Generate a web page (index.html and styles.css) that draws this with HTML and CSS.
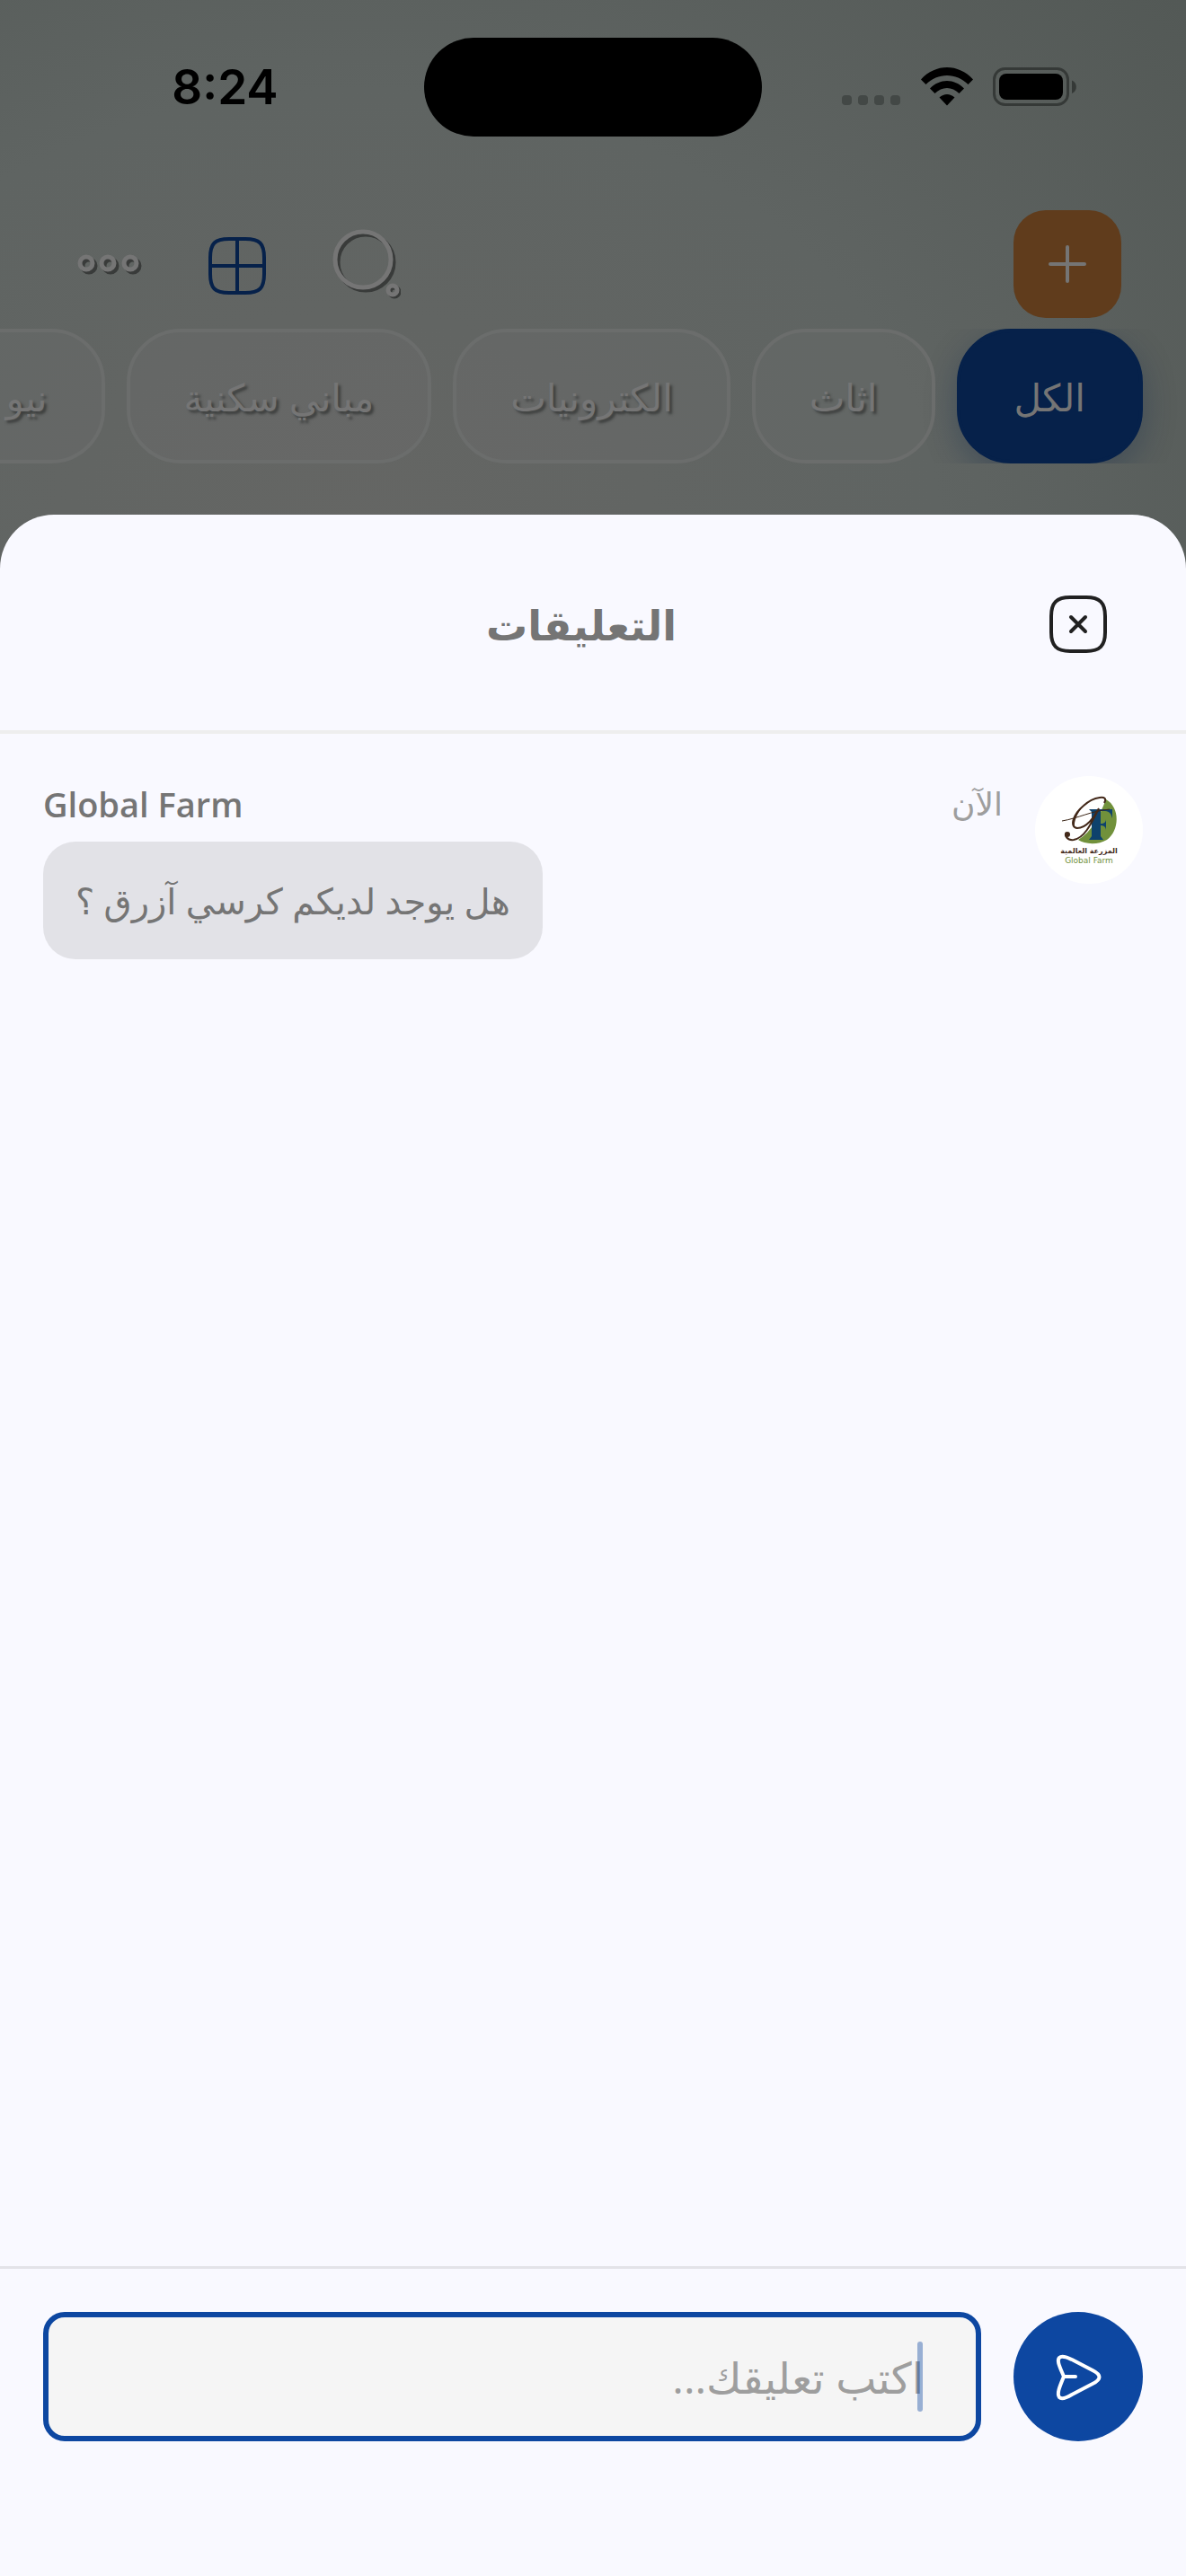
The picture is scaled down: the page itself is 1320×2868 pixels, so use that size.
FILE: index.html
```html
<!DOCTYPE html>
<html lang="ar" dir="rtl">
<head>
  <meta charset="UTF-8">
  <meta name="viewport" content="width=device-width, initial-scale=1">
  <title>التعليقات</title>
  <link rel="stylesheet" href="styles.css">
</head>
<body>
  <div class="status" dir="ltr">
    <span class="clock">8:24</span>
    <div class="island"></div>
    <div class="indicators">
      <svg class="signal" width="66" height="44" viewBox="0 0 66 44">
        <rect x="0" y="31" width="11" height="11" rx="4"/>
        <rect x="18" y="31" width="11" height="11" rx="4"/>
        <rect x="36" y="31" width="11" height="11" rx="4"/>
        <rect x="54" y="31" width="11" height="11" rx="4"/>
      </svg>
      <svg width="58" height="44" viewBox="0 0 58 44">
        <path d="M0 13.500C16-4.500 42-4.500 58 13.500L52.500 19C39.500 5.500 18.500 5.500 5.500 19Z"/>
        <path d="M10 23.500C21 12 37 12 48 23.500L42.500 29C34.500 21 23.500 21 15.500 29Z"/>
        <path d="M20.500 33.500C25.500 28.700 32.500 28.700 37.500 33.500L29 42.500Z"/>
      </svg>
      <svg width="94" height="44" viewBox="0 0 94 44">
        <rect class="battery-case" x="1.500" y="1.500" width="82" height="40" rx="12"/>
        <rect x="7" y="7" width="71" height="29" rx="8"/>
        <path class="battery-tip" d="M88 14.500c6.500 2.500 6.500 12 0 14.500z"/>
      </svg>
    </div>
  </div>

  <div class="toolbar" dir="ltr">
    <div class="tools">
      <button class="tool" aria-label="المزيد">
        <svg width="78" height="78" viewBox="0 0 78 78">
          <g class="icon-shadow"><circle cx="17" cy="41" r="7"/><circle cx="41" cy="41" r="7"/><circle cx="66" cy="41" r="7"/></g>
          <g class="icon-line"><circle cx="14" cy="38" r="7"/><circle cx="38" cy="38" r="7"/><circle cx="63" cy="38" r="7"/></g>
        </svg>
      </button>
      <button class="tool" aria-label="الأقسام">
        <svg class="grid-icon" width="78" height="78" viewBox="0 0 78 78">
          <path d="M30 11H48C64 11 69 16 69 32V50C69 66 64 71 48 71H30C14 71 9 66 9 50V32C9 16 14 11 30 11Z"/>
          <path d="M39 11V71M9 41H69"/>
        </svg>
      </button>
      <button class="tool" aria-label="بحث">
        <svg width="78" height="78" viewBox="0 0 78 78">
          <g class="icon-shadow"><circle cx="39" cy="37" r="31"/><circle cx="71" cy="70" r="5"/></g>
          <g class="icon-line"><circle cx="36" cy="34" r="31"/><circle cx="69" cy="68" r="5"/></g>
        </svg>
      </button>
    </div>
    <button class="add" aria-label="إضافة">
      <svg width="48" height="48" viewBox="0 0 48 48"><path d="M24 5V43M5 24H43"/></svg>
    </button>
  </div>

  <nav class="chips">
    <button class="chip active">الكل</button>
    <button class="chip">اثاث</button>
    <button class="chip">الكترونيات</button>
    <button class="chip">مباني سكنية</button>
    <button class="chip">نيو يورك</button>
  </nav>

  <section class="sheet">
    <header class="sheet-header">
      <button class="close" aria-label="إغلاق">
        <svg width="72" height="72" viewBox="0 0 72 72">
          <path d="M27 6H45C60 6 66 12 66 27V45C66 60 60 66 45 66H27C12 66 6 60 6 45V27C6 12 12 6 27 6Z"/>
          <path d="M28 28L44 44M44 28L28 44"/>
        </svg>
      </button>
      <h1>التعليقات</h1>
    </header>

    <main class="comments">
      <article class="comment">
        <svg class="avatar" viewBox="0 0 120 120">
          <circle cx="60" cy="60" r="60" fill="#fff"/>
          <path d="M79 26C95 35 94 61 80 71C70 77 55 76 48 71C63 62 71 46 79 26Z" fill="#71913b"/>
          <path d="M60 37H86V47C84 40 82 39 76 39H73V53C77 53 79 51 79 48V61C79 57 77 55 73 55V67L76 71H60L63 67V40Z" fill="#0e426c"/>
          <path d="M30 50C48 47 62 39 83 37" fill="none" stroke="#3a2415" stroke-width="1"/>
          <path d="M77 30C83 20 65 23 54 33C42 43 38 57 47 58C57 58 66 46 71 36C62 54 55 69 43 71C36 72 32 66 35 63" fill="none" stroke="#43291a" stroke-width="2"/>
          <path d="M55 32C43 40 38 55 44 57C43 50 47 41 55 32Z" fill="#43291a"/>
          <circle cx="36" cy="65" r="3" fill="#43291a"/>
          <text class="logo-ar" x="60" y="86">المزرعة العالمية</text>
          <text class="logo-en" x="60" y="97">Global Farm</text>
        </svg>
        <div class="comment-body">
          <div class="comment-meta">
            <time>الآن</time>
            <strong>Global Farm</strong>
          </div>
          <p class="bubble">هل يوجد لديكم كرسي آزرق ؟</p>
        </div>
      </article>
    </main>

    <form class="composer">
      <button class="send" type="button" aria-label="إرسال">
        <svg width="72" height="72" viewBox="0 0 72 72">
          <path d="M20 36C15 24 12 18 15 15C18 12 24 15 29 17L52 29C62 34 62 39 52 44L29 56C24 59 18 62 15 59C12 55 15 48 20 36ZM20 36H33"/>
        </svg>
      </button>
      <div class="field">
        <input type="text" aria-label="اكتب تعليقك" placeholder="اكتب تعليقك...">
        <span class="caret"></span>
      </div>
    </form>
  </section>
</body>
</html>
```
FILE: styles.css
```css
* { box-sizing: border-box; }
body { margin: 0; min-height: 100vh; display: flex; flex-direction: column; font-family: "Open Sans", "DejaVu Sans", sans-serif; color: #757575; background: radial-gradient(ellipse 1300px 1000px at 30% 600px, #656664, #5f6462 50%, #515754); }
button { padding: 0; border: none; background: none; font: inherit; color: inherit; cursor: pointer; }
svg { display: block; }

.status { display: grid; grid-template-columns: 1fr 376px 1fr; align-items: center; height: 234px; padding: 42px 0 82px; }
.clock { padding-left: 29px; text-align: center; font: 600 53px "Inter", sans-serif; color: #000; }
.island { height: 110px; border-radius: 55px; background: #000; }
.indicators { display: flex; align-items: center; gap: 22px; padding-left: 89px; }
.signal { fill: #434846; }
.battery-case { fill: none; stroke: #353937; stroke-width: 3; }
.battery-tip { fill: #353937; }

.toolbar { display: flex; justify-content: space-between; align-items: center; height: 120px; padding: 0 72px 0 82px; }
.tools { display: flex; gap: 65px; }
.icon-line, .icon-shadow { fill: none; stroke: #757575; stroke-width: 5; }
.icon-shadow { stroke: #393b3a; }
.grid-icon { fill: none; stroke: #06214a; stroke-width: 4; }
.add { display: flex; align-items: center; justify-content: center; width: 120px; height: 120px; border-radius: 36px; background: #603c1c; }
.add path { stroke: #757575; stroke-width: 4; stroke-linecap: round; }

.chips { display: flex; gap: 24px; height: 150px; margin: 12px 0 57px; padding: 0 48px; overflow: hidden; }
.chip { flex: none; padding: 0 60px; border: 4px solid #6b6d6c; border-radius: 60px; background: rgba(117, 117, 117, 0.2); font-size: 42px; text-shadow: 3px 3px 3px #3c3e3d; white-space: nowrap; }
.chip.active { border-color: #06214a; background: #06214a; text-shadow: none; box-shadow: 0 12px 36px rgba(6, 33, 74, 0.3); }

.sheet { flex: 1; display: flex; flex-direction: column; border-radius: 60px 60px 0 0; background: #f9f9ff; }
.sheet-header { display: grid; grid-template-columns: 72px 1fr 72px; align-items: center; height: 244px; padding: 4px 84px 0 58px; border-bottom: 4px solid #eee; }
.sheet-header h1 { margin: 0; text-align: center; font-size: 46px; font-weight: 700; }
.close { width: 72px; height: 72px; }
.close path { fill: none; stroke: #212121; stroke-width: 4; stroke-linecap: round; }

.comments { flex: 1; padding: 47px 48px; }
.comment { display: flex; gap: 36px; }
.avatar { flex: none; width: 120px; height: 120px; }
.logo-ar { font: 700 8px "DejaVu Sans", sans-serif; fill: #43291a; text-anchor: middle; }
.logo-en { font: 9px "DejaVu Sans", sans-serif; fill: #71913b; text-anchor: middle; }
.comment-body { flex: 1; display: flex; flex-direction: column; align-items: flex-end; }
.comment-meta { display: flex; justify-content: space-between; align-self: stretch; height: 73px; line-height: 62px; }
.comment-meta strong { font-size: 38px; font-weight: 600; }
.comment-meta time { font-size: 36px; color: #9e9e9e; }
.bubble { margin: 0; padding: 36px; border-radius: 36px; background: #e2e2e7; font-size: 40px; line-height: 59px; }

.composer { display: flex; gap: 36px; padding: 48px 48px 150px; border-top: 3px solid #e3e3e8; }
.send { display: flex; align-items: center; justify-content: center; flex: none; width: 144px; height: 144px; border-radius: 50%; background: #0d47a1; }
.send path { fill: none; stroke: #fff; stroke-width: 4; stroke-linecap: round; stroke-linejoin: round; }
.field { position: relative; flex: 1; }
.field input { display: block; width: 100%; height: 144px; padding: 0 58px; border: 6px solid #0d47a1; border-radius: 24px; outline: none; background: #f5f5f5; font: inherit; font-size: 48px; color: #757575; }
.field input::placeholder { color: #9e9e9e; opacity: 1; }
.caret { position: absolute; top: 33px; right: 65px; width: 6px; height: 78px; border-radius: 3px; background: rgba(13, 71, 161, 0.4); }
```
